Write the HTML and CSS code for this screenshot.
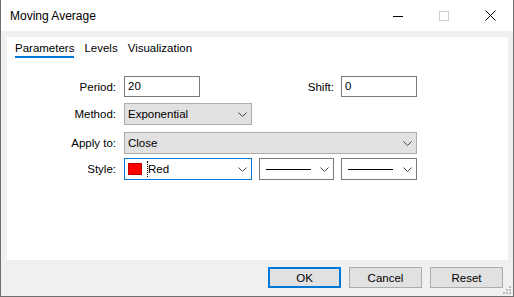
FILE: index.html
```html
<!DOCTYPE html>
<html lang="en">
<head>
    <meta charset="UTF-8">
    <title>Moving Average</title>
    <link rel="stylesheet" href="styles.css">
</head>
<body>
    <div class="window">
        <div class="titlebar">
            <span class="title">Moving Average</span>
            <div class="caption-btns">
                <div class="caption-btn">
                    <svg width="10" height="10" viewBox="0 0 10 10"><rect x="0" y="5" width="10" height="1" fill="#000"/></svg>
                </div>
                <div class="caption-btn">
                    <svg width="10" height="10" viewBox="0 0 10 10"><rect x="0.5" y="0.5" width="9" height="9" fill="none" stroke="#cccccc"/></svg>
                </div>
                <div class="caption-btn">
                    <svg width="11" height="11" viewBox="0 0 11 11"><path d="M0.5 0.5 L10.5 10.5 M10.5 0.5 L0.5 10.5" stroke="#000" stroke-width="1"/></svg>
                </div>
            </div>
        </div>

        <div class="client">
            <div class="panel">
                <div class="tabs">
                    <span class="tab active">Parameters</span>
                    <span class="tab">Levels</span>
                    <span class="tab">Visualization</span>
                </div>

                <div class="form">
                    <div class="row row-period">
                        <span class="label">Period:</span>
                        <div class="edit">20</div>
                        <span class="label label-shift">Shift:</span>
                        <div class="edit">0</div>
                    </div>
                    <div class="row row-method">
                        <span class="label">Method:</span>
                        <div class="combo combo-short">
                            <span class="combo-text">Exponential</span>
                            <svg class="chevron" width="9" height="5" viewBox="0 0 9 5"><path d="M0.5 0.5 L4.5 4.5 L8.5 0.5" fill="none" stroke="#444" stroke-width="1"/></svg>
                        </div>
                    </div>
                    <div class="row row-apply">
                        <span class="label">Apply to:</span>
                        <div class="combo combo-wide">
                            <span class="combo-text">Close</span>
                            <svg class="chevron" width="9" height="5" viewBox="0 0 9 5"><path d="M0.5 0.5 L4.5 4.5 L8.5 0.5" fill="none" stroke="#444" stroke-width="1"/></svg>
                        </div>
                    </div>
                    <div class="row row-style">
                        <span class="label">Style:</span>
                        <div class="combo combo-short combo-focus">
                            <span class="swatch"></span>
                            <span class="combo-text focus-text">Red</span>
                            <svg class="chevron" width="9" height="5" viewBox="0 0 9 5"><path d="M0.5 0.5 L4.5 4.5 L8.5 0.5" fill="none" stroke="#444" stroke-width="1"/></svg>
                        </div>
                        <div class="combo combo-line combo-line1">
                            <span class="line-sample"></span>
                            <svg class="chevron" width="9" height="5" viewBox="0 0 9 5"><path d="M0.5 0.5 L4.5 4.5 L8.5 0.5" fill="none" stroke="#444" stroke-width="1"/></svg>
                        </div>
                        <div class="combo combo-line combo-line2">
                            <span class="line-sample"></span>
                            <svg class="chevron" width="9" height="5" viewBox="0 0 9 5"><path d="M0.5 0.5 L4.5 4.5 L8.5 0.5" fill="none" stroke="#444" stroke-width="1"/></svg>
                        </div>
                    </div>
                </div>
            </div>

            <div class="footer">
                <button class="btn btn-default">OK</button>
                <button class="btn">Cancel</button>
                <button class="btn">Reset</button>
            </div>

            <svg class="grip" width="8" height="8" viewBox="0 0 8 8">
                <rect x="6" y="0" width="2" height="2" fill="#bdbdbd"/>
                <rect x="3" y="3" width="2" height="2" fill="#bdbdbd"/>
                <rect x="6" y="3" width="2" height="2" fill="#bdbdbd"/>
                <rect x="0" y="6" width="2" height="2" fill="#bdbdbd"/>
                <rect x="3" y="6" width="2" height="2" fill="#bdbdbd"/>
                <rect x="6" y="6" width="2" height="2" fill="#bdbdbd"/>
            </svg>
        </div>
    </div>
</body>
</html>
```

FILE: styles.css
```css
* {
    box-sizing: border-box;
}
body {
    margin: 0;
    font-family: "Liberation Sans", Arial, sans-serif;
    font-size: 11.5px;
    color: #000;
    background-color: #f0f0f0;
}
.window {
    width: 514px;
    height: 297px;
    border: 1px solid #707070;
    border-top: none;
    display: flex;
    flex-direction: column;
    background-color: #f0f0f0;
}
.titlebar {
    height: 31px;
    background-color: #fff;
    display: flex;
    align-items: center;
    justify-content: space-between;
}
.title {
    padding-left: 9px;
    line-height: 16px;
    margin-top: 1px;
    font-size: 12px;
}
.caption-btns {
    display: flex;
    height: 31px;
}
.caption-btn {
    width: 46px;
    height: 31px;
    display: flex;
    align-items: center;
    justify-content: center;
}
.client {
    flex: 1;
    position: relative;
    display: flex;
    flex-direction: column;
}
.panel {
    margin: 6px 5px 0 6px;
    height: 223px;
    background-color: #fff;
}
.tabs {
    display: flex;
    gap: 10px;
    padding: 3px 0 0 8px;
}
.tab {
    line-height: 16px;
    border-bottom: 2px solid transparent;
}
.tab.active {
    border-bottom-color: #0078d7;
}
.form {
    margin-top: 18px;
}
.row {
    display: flex;
    align-items: center;
}
.label {
    width: 109px;
    margin-right: 8px;
    text-align: right;
}
.label-shift {
    width: 134px;
    margin-right: 7px;
}
.row-method {
    margin-top: 6px;
}
.row-apply {
    margin-top: 7px;
}
.row-style {
    margin-top: 4px;
}
.edit {
    width: 76px;
    height: 21px;
    border: 1px solid #7a7a7a;
    background-color: #fff;
    padding-left: 3px;
    line-height: 18px;
}
.combo {
    height: 22px;
    border: 1px solid #adadad;
    background-color: #e1e1e1;
    display: flex;
    align-items: center;
    padding-left: 3px;
    position: relative;
}
.combo-text {
    line-height: 16px;
}
.chevron {
    position: absolute;
    right: 4px;
    top: 8px;
}
.combo-short {
    width: 128px;
}
.combo-wide {
    width: 293px;
}
.combo-focus {
    background-color: #fff;
    border-color: #0078d7;
}
.swatch {
    width: 14px;
    height: 12px;
    background-color: #ff0000;
    border: 1px solid #c00000;
    margin-right: 5px;
}
.focus-text {
    border-left: 1px dotted #000;
}
.combo-line {
    background-color: #fff;
    border-color: #7a7a7a;
    padding-left: 6px;
}
.combo-line1 {
    width: 75px;
    margin-left: 7px;
}
.combo-line2 {
    width: 76px;
    margin-left: 7px;
}
.line-sample {
    width: 45px;
    height: 1px;
    background-color: #000;
}
.footer {
    display: flex;
    justify-content: flex-end;
    gap: 8px;
    padding: 7px 10px 0 0;
}
.btn {
    width: 73px;
    height: 21px;
    border: 1px solid #adadad;
    background-color: #e1e1e1;
    font-family: inherit;
    font-size: 11.5px;
    color: #000;
    padding: 0;
}
.btn-default {
    border: 2px solid #0078d7;
}
.grip {
    position: absolute;
    right: 2px;
    bottom: 2px;
}
```
